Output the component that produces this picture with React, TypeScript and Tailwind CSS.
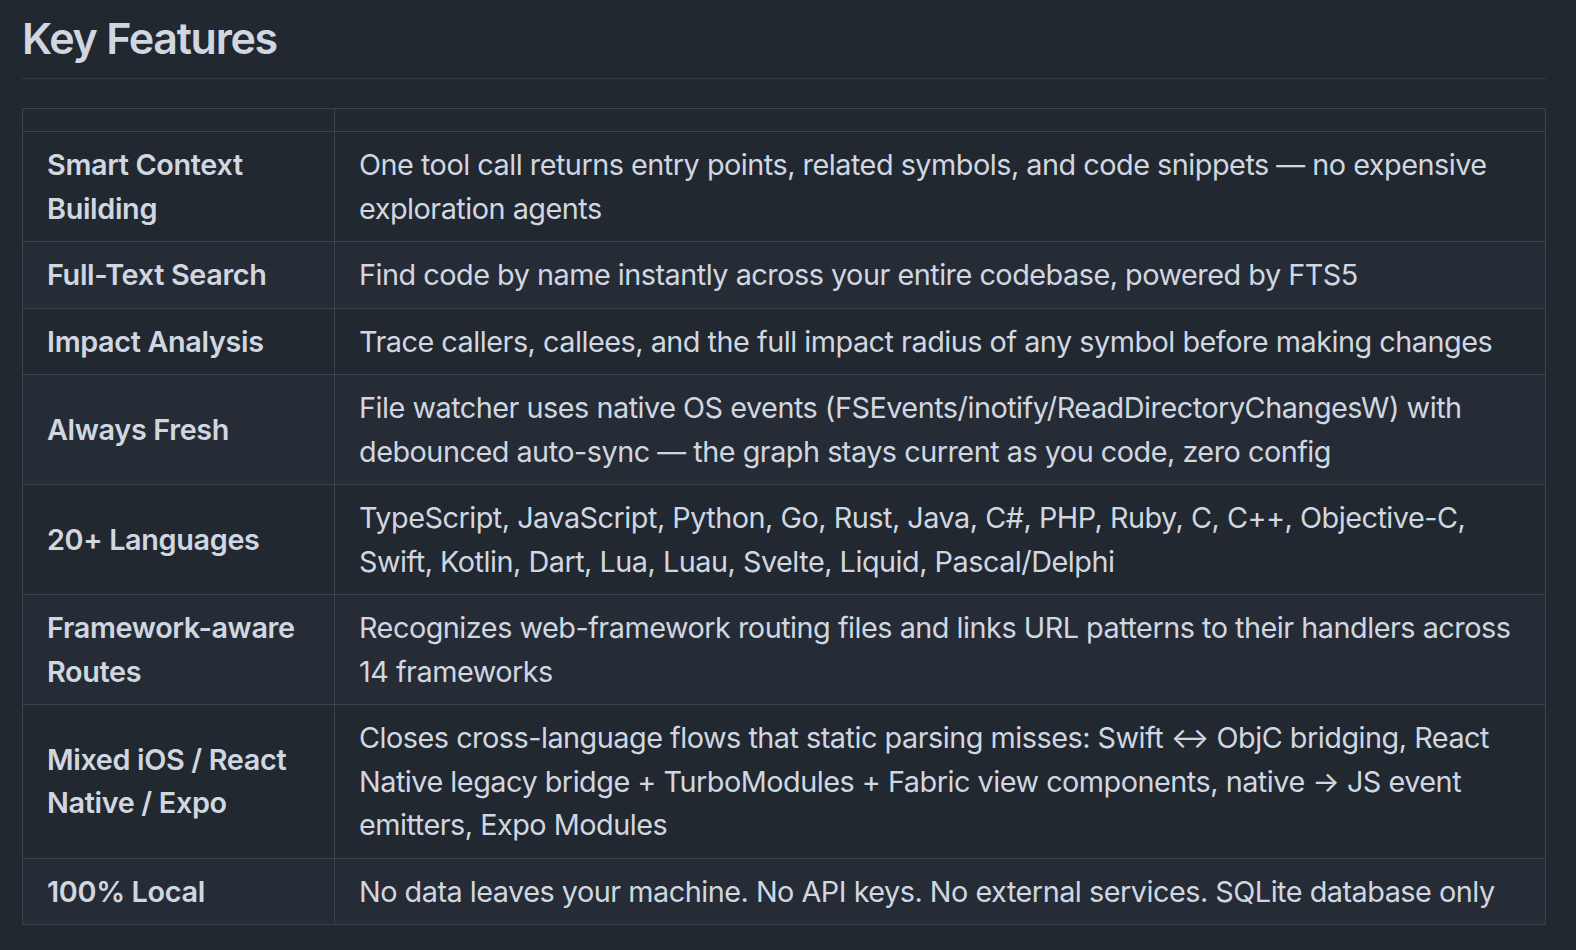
const rows: [string, string][] = [
  ["Smart Context Building", "One tool call returns entry points, related symbols, and code snippets — no expensive exploration agents"],
  ["Full-Text Search", "Find code by name instantly across your entire codebase, powered by FTS5"],
  ["Impact Analysis", "Trace callers, callees, and the full impact radius of any symbol before making changes"],
  ["Always Fresh", "File watcher uses native OS events (FSEvents/inotify/ReadDirectoryChangesW) with debounced auto-sync — the graph stays current as you code, zero config"],
  ["20+ Languages", "TypeScript, JavaScript, Python, Go, Rust, Java, C#, PHP, Ruby, C, C++, Objective-C, Swift, Kotlin, Dart, Lua, Luau, Svelte, Liquid, Pascal/Delphi"],
  ["Framework-aware Routes", "Recognizes web-framework routing files and links URL patterns to their handlers across 14 frameworks"],
  ["Mixed iOS / React Native / Expo", "Closes cross-language flows that static parsing misses: Swift ↔ ObjC bridging, React Native legacy bridge + TurboModules + Fabric view components, native → JS event emitters, Expo Modules"],
  ["100% Local", "No data leaves your machine. No API keys. No external services. SQLite database only"],
];

export default function App() {
  return (
    <div className="min-h-[950px] bg-[#212830] text-[#d1d7e0] font-['Inter','Noto_Sans',sans-serif] pl-[22px] pt-[11px]">
      <div className="w-[1524px]">
        <h2 className="text-[43px] leading-[54px] font-semibold tracking-[-0.03em] pb-[13px] border-b border-[#3d444db3]">
          Key Features
        </h2>
        <table className="mt-[29px] w-full border-collapse text-[28.8px] leading-[43.5px] tracking-[-0.017em]">
          <thead>
            <tr className="bg-[#212830]">
              <th className="w-[312px] border border-[#3d444d] px-[24px] py-[11px]"></th>
              <th className="border border-[#3d444d] px-[24px] py-[11px]"></th>
            </tr>
          </thead>
          <tbody>
            {rows.map(([name, desc], i) => (
              <tr key={name} className={i % 2 === 1 ? "bg-[#262c36]" : "bg-[#212830]"}>
                <td className="w-[312px] border border-[#3d444d] px-[24px] py-[11px] font-semibold tracking-[-0.012em] align-middle">
                  {name}
                </td>
                <td className="border border-[#3d444d] px-[24px] py-[11px] align-middle">{desc}</td>
              </tr>
            ))}
          </tbody>
        </table>
      </div>
    </div>
  );
}
